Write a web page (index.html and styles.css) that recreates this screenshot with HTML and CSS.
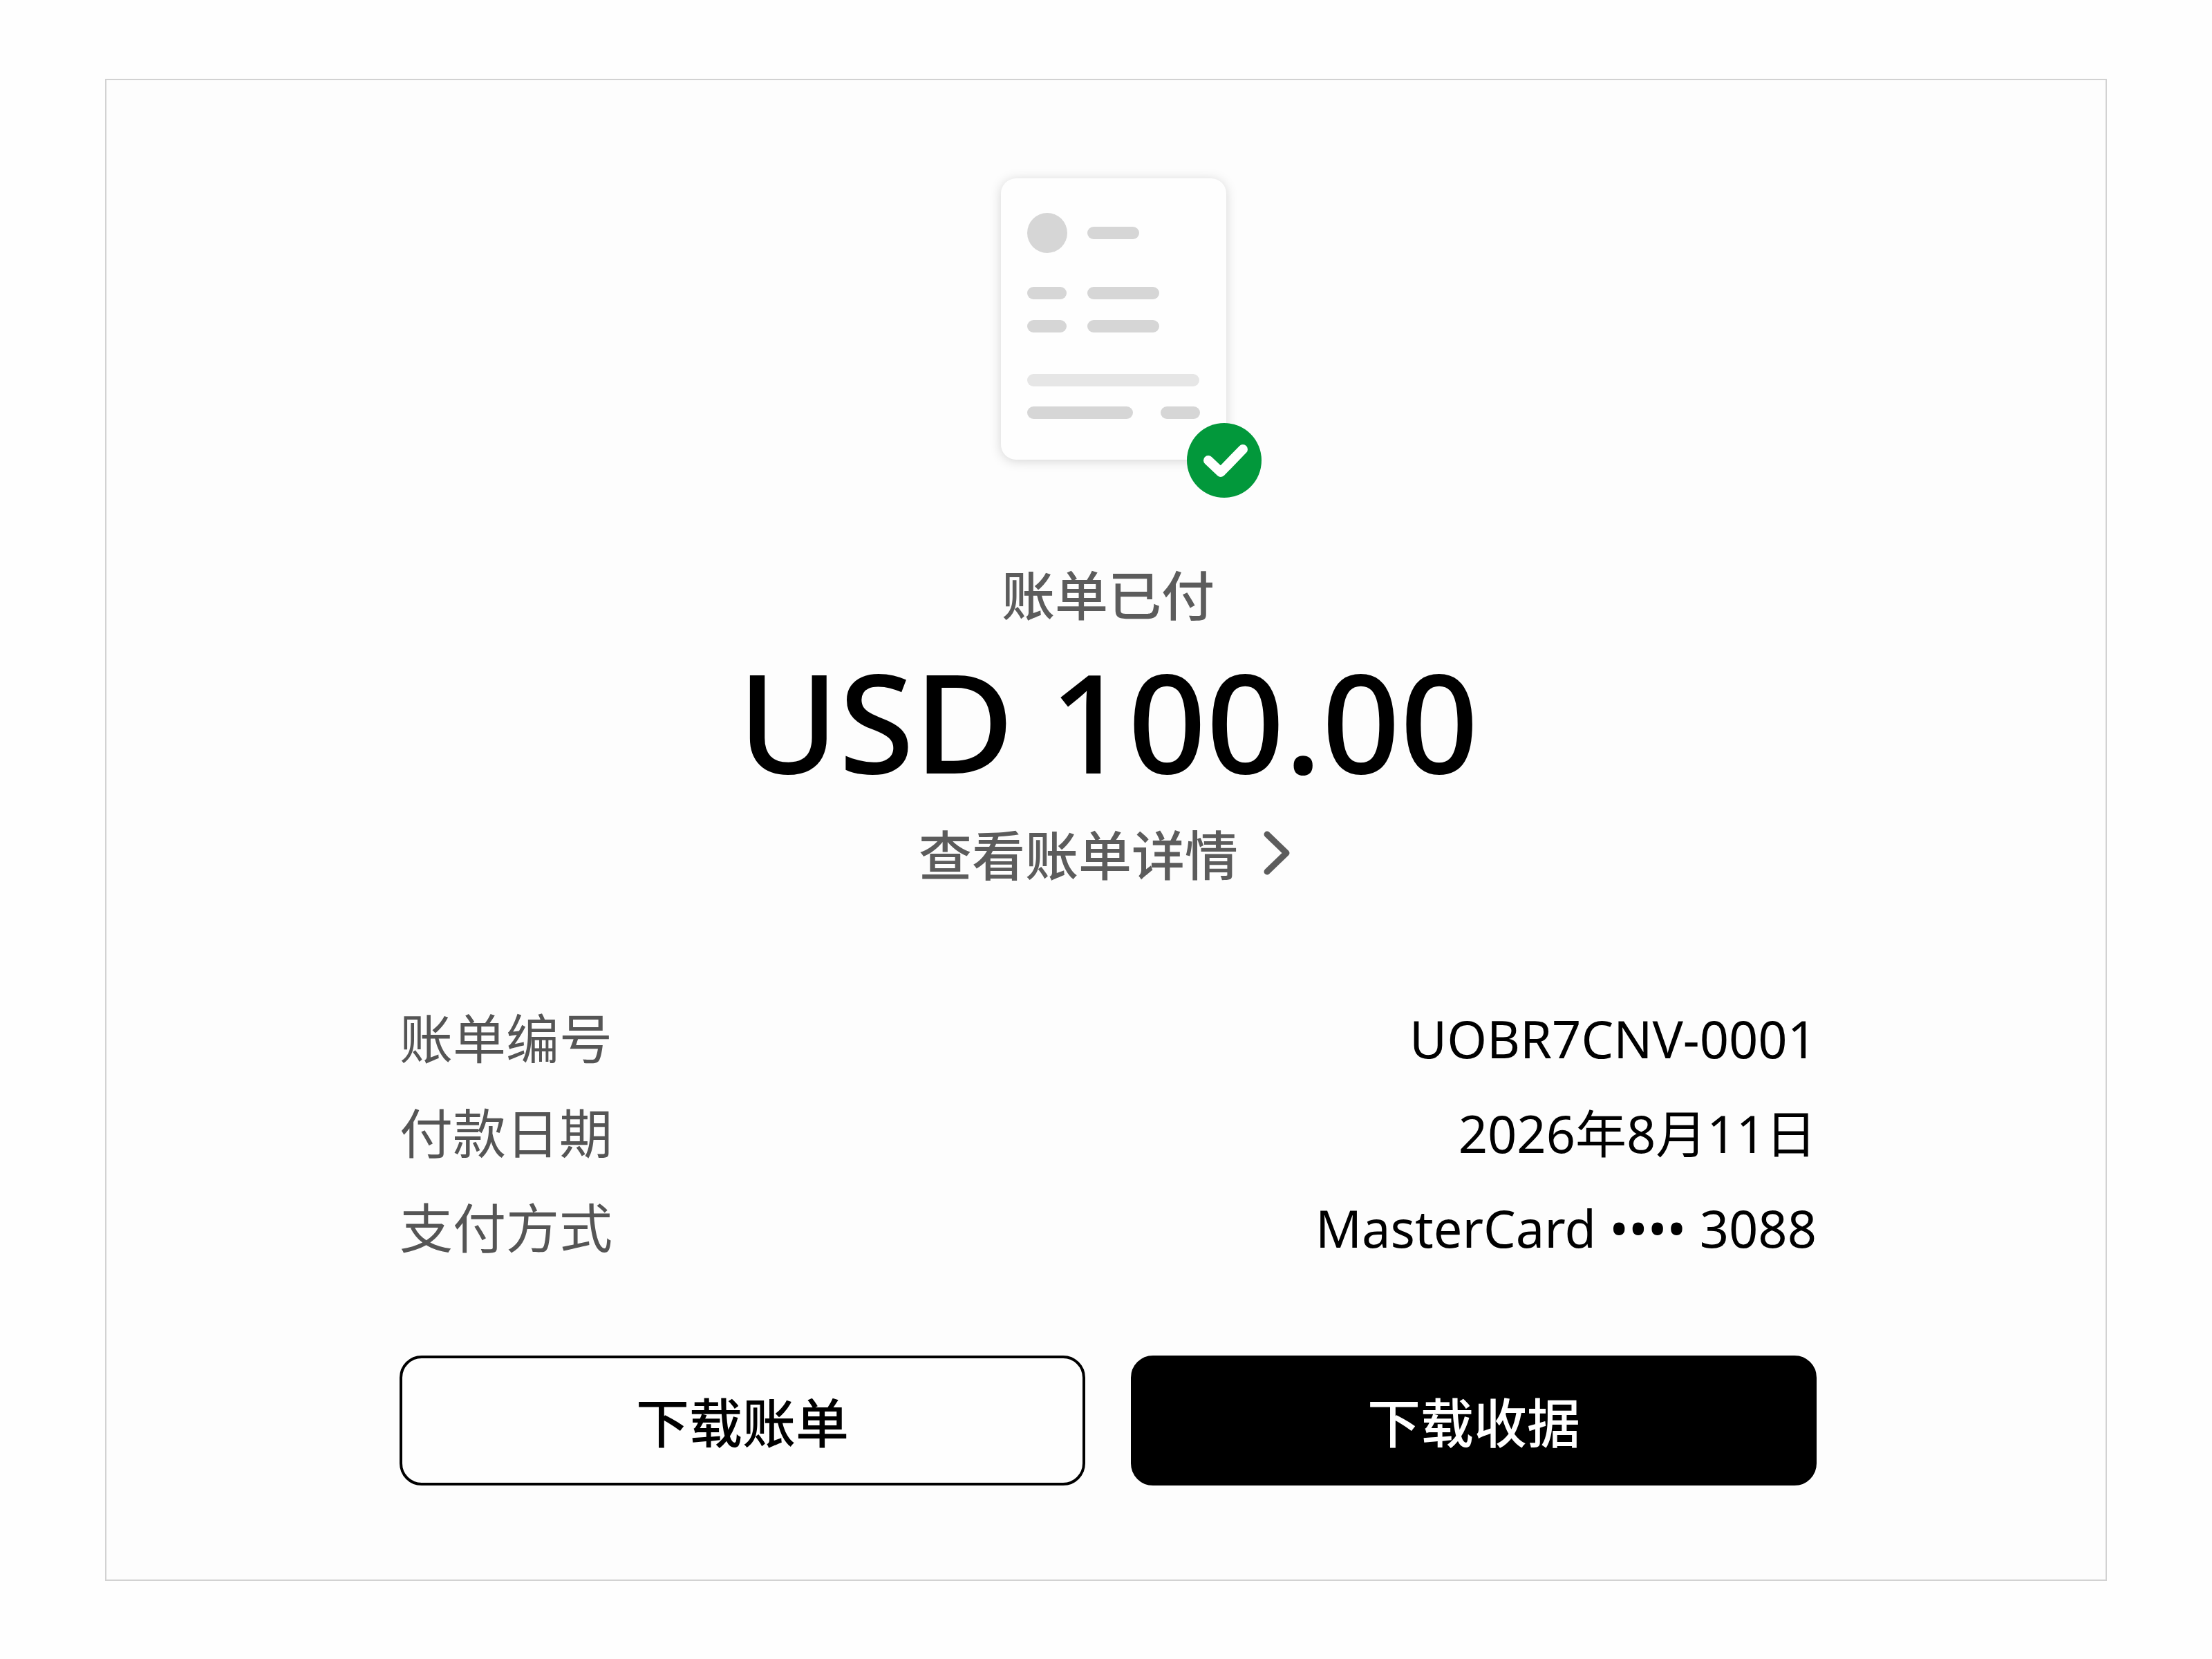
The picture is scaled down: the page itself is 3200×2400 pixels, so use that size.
FILE: index.html
```html
<!DOCTYPE html>
<html lang="zh-CN">
<head>
  <meta charset="UTF-8" />
  <meta name="viewport" content="width=device-width, initial-scale=1.0" />
  <title>账单已付</title>
  <link rel="stylesheet" href="styles.css">
</head>
<body>

  <main class="card">
    <svg class="invoice-icon" viewBox="0 0 444 490" aria-hidden="true">
      <rect class="paper" x="67" y="18" width="326" height="407" rx="22" />
      <g class="dark">
        <circle cx="134" cy="97" r="29" />
        <rect x="192" y="88" width="75" height="18" rx="9" />
        <rect x="105" y="175" width="57" height="18" rx="9" />
        <rect x="192" y="175" width="104" height="18" rx="9" />
        <rect x="105" y="223" width="57" height="18" rx="9" />
        <rect x="192" y="223" width="104" height="18" rx="9" />
        <rect x="105" y="348" width="153" height="18" rx="9" />
        <rect x="298" y="348" width="57" height="18" rx="9" />
      </g>
      <rect class="light" x="105" y="301" width="249" height="18" rx="9" />
      <circle class="badge" cx="390" cy="426" r="54" />
      <path class="check" d="M367 426 L385 443 L417 410" />
    </svg>

    <p class="status">账单已付</p>
    <h1 class="amount">USD 100.00</h1>
    <a class="details-link" href="#">
      查看账单详情
      <svg class="chevron" viewBox="0 0 54 72" aria-hidden="true"><path d="M10 5 L38 32 L10 59" /></svg>
    </a>

    <dl class="details">
      <div class="row">
        <dt>账单编号</dt>
        <dd>UOBR7CNV-0001</dd>
      </div>
      <div class="row">
        <dt>付款日期</dt>
        <dd>2026年8月11日</dd>
      </div>
      <div class="row">
        <dt>支付方式</dt>
        <dd>MasterCard •••• 3088</dd>
      </div>
    </dl>

    <div class="buttons">
      <button type="button" class="btn">下载账单</button>
      <button type="button" class="btn btn-primary">下载收据</button>
    </div>
  </main>

</body>
</html>
```
FILE: styles.css
```css
* {
  box-sizing: border-box;
}

body {
  margin: 0;
  padding: 114px 152px;
  background: #fefefe;
  font-family: "Noto Sans", "Noto Sans CJK SC", sans-serif;
  font-size: 77px;
  color: #000;
}

.card {
  display: flex;
  flex-direction: column;
  align-items: center;
  padding: 124px 418px 136px 424px;
  background: #fdfdfd;
  border: 2px solid #d2d2d2;
}

.invoice-icon {
  width: 444px;
  height: 490px;
  margin-bottom: 76px;
}

.paper {
  fill: #fefefe;
  filter: drop-shadow(0 2px 8px rgba(0, 0, 0, 0.16));
}

.dark {
  fill: #d6d6d6;
}

.light {
  fill: #e6e6e6;
}

.badge {
  fill: #02983b;
}

.check {
  fill: none;
  stroke: #fff;
  stroke-width: 14;
  stroke-linecap: round;
  stroke-linejoin: round;
}

.status {
  margin: 0;
  font-weight: 500;
  line-height: 112px;
  color: #5c5c5c;
}

.amount {
  margin: 0;
  font-size: 198px;
  font-weight: 500;
  line-height: 248px;
}

.details-link {
  display: flex;
  align-items: center;
  gap: 32px;
  margin-top: 16px;
  font-weight: 500;
  line-height: 112px;
  color: #5c5c5c;
  text-decoration: none;
}

.chevron {
  width: 54px;
  height: 72px;
  fill: none;
  stroke: #5c5c5c;
  stroke-width: 9;
  stroke-linecap: round;
  stroke-linejoin: round;
}

.details {
  align-self: stretch;
  margin: 140px 0 116px;
}

.row {
  display: flex;
  justify-content: space-between;
  line-height: 137px;
}

.row dt {
  color: #555;
}

.row dd {
  margin: 0;
  font-size: 74px;
}

.buttons {
  align-self: stretch;
  display: flex;
  gap: 66px;
}

.btn {
  flex: 1;
  height: 188px;
  border: 4px solid #000;
  border-radius: 32px;
  background: #fefefe;
  font: inherit;
  font-weight: 500;
  color: #000;
  cursor: pointer;
}

.btn-primary {
  background: #000;
  color: #fff;
}
```
